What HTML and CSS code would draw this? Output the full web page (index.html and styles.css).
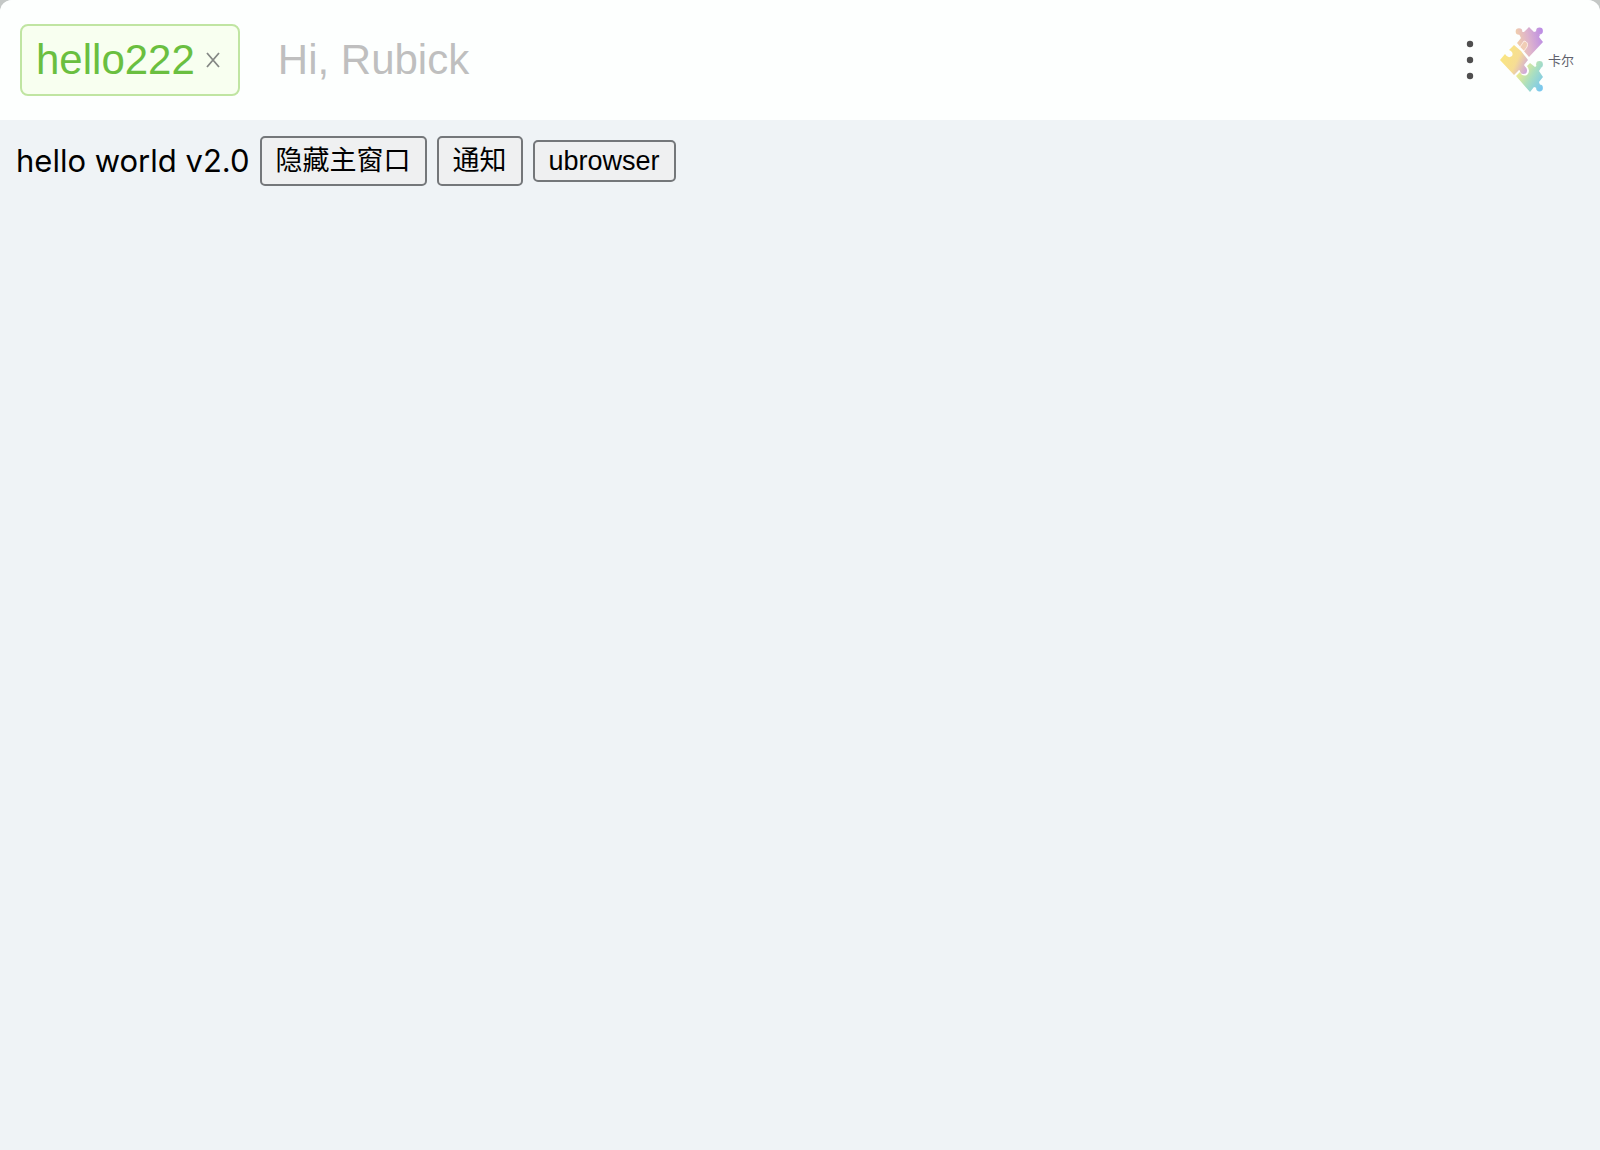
FILE: index.html
```html
<!DOCTYPE html>
<html lang="zh-CN">
<head>
<meta charset="utf-8">
<title>Rubick</title>
<link rel="stylesheet" href="styles.css">
</head>
<body>
<div class="window">
  <header class="search-bar">
    <div class="tag">
      <span class="tag-name">hello222</span>
      <button class="tag-close" type="button" aria-label="Close">
        <svg width="14" height="16" viewBox="0 0 14 16" fill="none" stroke="#858885" stroke-width="1.8"><path d="M1 1L13 15M13 1L1 15"/></svg>
      </button>
    </div>
    <input class="search-input" type="text" placeholder="Hi, Rubick" aria-label="Search">
    <button class="more" type="button" aria-label="More">
      <svg width="8" height="40" viewBox="0 0 8 40" fill="#4f4f4f"><circle cx="4" cy="4" r="3.2"/><circle cx="4" cy="20" r="3.2"/><circle cx="4" cy="36" r="3.2"/></svg>
    </button>
    <div class="logo">
      <svg width="44" height="66" viewBox="0 0 44 66" aria-hidden="true">
        <defs>
          <linearGradient id="top" gradientUnits="userSpaceOnUse" x1="15" y1="14" x2="44" y2="8"><stop offset="0" stop-color="#f5d3a4"/><stop offset=".45" stop-color="#deb4cc"/><stop offset="1" stop-color="#b98ae6"/></linearGradient>
          <linearGradient id="mid" gradientUnits="userSpaceOnUse" x1="2" y1="28" x2="28" y2="40"><stop offset="0" stop-color="#fae680"/><stop offset=".55" stop-color="#f6dd94"/><stop offset="1" stop-color="#cfa9dc"/></linearGradient>
          <linearGradient id="low" gradientUnits="userSpaceOnUse" x1="17" y1="45" x2="42" y2="60"><stop offset="0" stop-color="#f4ec8a"/><stop offset=".5" stop-color="#aadfc0"/><stop offset="1" stop-color="#7ac8ee"/></linearGradient>
        </defs>
        <g fill="url(#top)">
          <path d="M29 0L34 5L37 4L40 8L39 10L43 15L29 30L17 16L21 11L19 7L22 5L24 5Z"/>
          <circle cx="39.5" cy="4" r="3.4"/>
          <circle cx="19" cy="4.5" r="3.3"/>
        </g>
        <path d="M20 20L24 14Q29 15 27 20L24 24Z" fill="#f0cdb5" stroke="#fff4ee" stroke-width=".8"/>
        <g fill="url(#mid)">
          <path d="M0 33L5 27Q8 32 12 29Q14 25 9 23L14 18L21 24L28 33L24 38L26 41L22 45L19 43L14 48Z"/>
          <circle cx="23.5" cy="43.5" r="3.5"/>
        </g>
        <g fill="url(#low)">
          <path d="M16 49L20 45Q22 50 27 48Q31 44 27 39L30 36L35 40L38 38L41 41L39 44L43 50L39 55L40 58L37 61L34 60L30 65Z"/>
          <circle cx="39.5" cy="37.5" r="3.4"/>
          <circle cx="39.5" cy="61" r="3.4"/>
        </g>
      </svg>
      <span class="logo-name">卡尔</span>
    </div>
  </header>
  <main class="plugin">
    <span>hello world v2.0</span>
    <button class="action" type="button">隐藏主窗口</button>
    <button class="action" type="button">通知</button>
    <button class="action compact" type="button">ubrowser</button>
  </main>
</div>
</body>
</html>
```
FILE: styles.css
```css
* {
  box-sizing: border-box;
}

body {
  margin: 0;
  background: #c4c8c6;
  font-family: Inter, "Noto Sans CJK SC", sans-serif;
}

button {
  padding: 0;
  border: 0;
  background: none;
  font: inherit;
}

.window {
  display: flex;
  flex-direction: column;
  min-height: 100vh;
  overflow: hidden;
  border-radius: 12px 12px 0 0;
  background: #eff3f6;
}

.search-bar {
  display: flex;
  align-items: center;
  height: 120px;
  padding: 0 26px 0 20px;
  background: #fdfffe;
}

.tag {
  display: flex;
  align-items: center;
  gap: 11px;
  height: 72px;
  padding: 0 18px 0 14px;
  border: 2px solid #c0e5a2;
  border-radius: 8px;
  background: #f8fff0;
}

.tag-name {
  color: #6abf40;
  font-family: "Liberation Sans", sans-serif;
  font-size: 42px;
  line-height: 48px;
}

.tag-close {
  display: flex;
}

.search-input {
  flex: 1;
  min-width: 0;
  margin-left: 38px;
  padding: 0;
  border: 0;
  outline: 0;
  background: none;
  font-family: "Liberation Sans", sans-serif;
  font-size: 42px;
  line-height: 56px;
}

.search-input::placeholder {
  color: #bfbfbf;
  opacity: 1;
}

.more {
  display: flex;
  margin-right: 26px;
}

.logo {
  display: flex;
  align-items: center;
  gap: 4px;
}

.logo-name {
  color: #60626c;
  font-size: 13px;
  line-height: 20px;
}

.plugin {
  display: flex;
  align-items: center;
  gap: 10px;
  padding: 16px;
  color: #000;
  font-size: 31px;
  line-height: 48px;
}

.action {
  height: 50px;
  padding: 0 14px;
  border: 2px solid #74777a;
  border-radius: 5px;
  background: #eff0f1;
  color: #000;
  font-family: "Liberation Sans", "Noto Sans CJK SC", sans-serif;
  font-size: 27px;
  line-height: 40px;
}

.compact {
  height: 42px;
  line-height: 36px;
}
```
